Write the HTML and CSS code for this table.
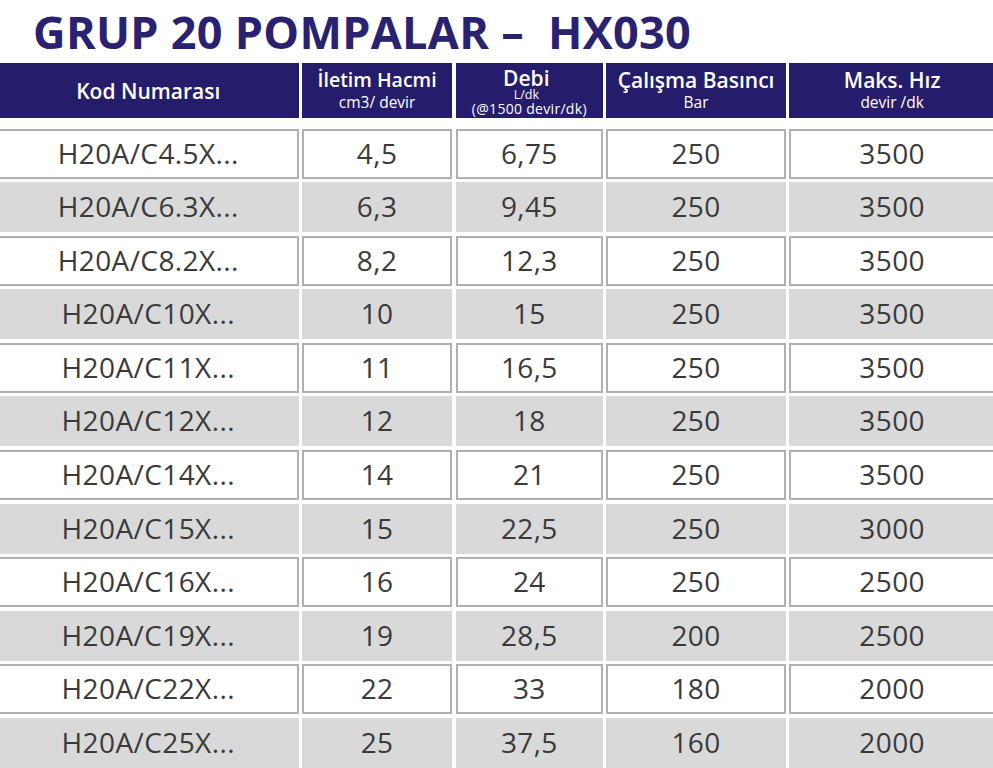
FILE: index.html
```html
<!DOCTYPE html>
<html lang="tr">
<head>
<meta charset="utf-8">
<title>GRUP 20 POMPALAR – HX030</title>
<link rel="stylesheet" href="styles.css">
</head>
<body>
<div class="page">
  <h1 class="title">GRUP 20 POMPALAR –&nbsp; HX030</h1>
  <div class="row head">
    <div class="hcell"><span class="hmain">Kod Numarası</span></div>
    <div class="hcell"><span class="hmain narrow">İletim Hacmi</span><span class="hsub">cm3/ devir</span></div>
    <div class="hcell debi"><span class="hmain">Debi</span><span class="htiny">L/dk</span><span class="htiny2">(@1500 devir/dk)</span></div>
    <div class="hcell"><span class="hmain">Çalışma Basıncı</span><span class="hsub">Bar</span></div>
    <div class="hcell"><span class="hmain">Maks. Hız</span><span class="hsub">devir /dk</span></div>
  </div>
  <div class="body">
    <div class="row white"><div class="cell">H20A/C4.5X...</div><div class="cell">4,5</div><div class="cell">6,75</div><div class="cell">250</div><div class="cell">3500</div></div>
    <div class="row grey"><div class="cell">H20A/C6.3X...</div><div class="cell">6,3</div><div class="cell">9,45</div><div class="cell">250</div><div class="cell">3500</div></div>
    <div class="row white"><div class="cell">H20A/C8.2X...</div><div class="cell">8,2</div><div class="cell">12,3</div><div class="cell">250</div><div class="cell">3500</div></div>
    <div class="row grey"><div class="cell">H20A/C10X...</div><div class="cell">10</div><div class="cell">15</div><div class="cell">250</div><div class="cell">3500</div></div>
    <div class="row white"><div class="cell">H20A/C11X...</div><div class="cell">11</div><div class="cell">16,5</div><div class="cell">250</div><div class="cell">3500</div></div>
    <div class="row grey"><div class="cell">H20A/C12X...</div><div class="cell">12</div><div class="cell">18</div><div class="cell">250</div><div class="cell">3500</div></div>
    <div class="row white"><div class="cell">H20A/C14X...</div><div class="cell">14</div><div class="cell">21</div><div class="cell">250</div><div class="cell">3500</div></div>
    <div class="row grey"><div class="cell">H20A/C15X...</div><div class="cell">15</div><div class="cell">22,5</div><div class="cell">250</div><div class="cell">3000</div></div>
    <div class="row white"><div class="cell">H20A/C16X...</div><div class="cell">16</div><div class="cell">24</div><div class="cell">250</div><div class="cell">2500</div></div>
    <div class="row grey"><div class="cell">H20A/C19X...</div><div class="cell">19</div><div class="cell">28,5</div><div class="cell">200</div><div class="cell">2500</div></div>
    <div class="row white"><div class="cell">H20A/C22X...</div><div class="cell">22</div><div class="cell">33</div><div class="cell">180</div><div class="cell">2000</div></div>
    <div class="row grey"><div class="cell">H20A/C25X...</div><div class="cell">25</div><div class="cell">37,5</div><div class="cell">160</div><div class="cell">2000</div></div>
  </div>
</div>
</body>
</html>
```

FILE: styles.css
```css
html, body {
  margin: 0;
  padding: 0;
  background: #ffffff;
  overflow: hidden;
}

.page {
  width: 993px;
  height: 768px;
  overflow: hidden;
  font-family: "Open Sans", "Noto Sans", sans-serif;
}

.title {
  margin: 0;
  height: 63px;
  box-sizing: border-box;
  padding: 9px 0 0 33px;
  font-size: 45px;
  line-height: 46px;
  font-weight: 700;
  letter-spacing: 0.3px;
  color: #2a2270;
  white-space: nowrap;
}

.row {
  display: grid;
  grid-template-columns: 300.5px 150.8px 147.3px 179.8px 206px;
  column-gap: 3.2px;
  margin-left: -2px;
}

.head {
  height: 55px;
}

.hcell {
  background: #251c6b;
  color: #ffffff;
  display: flex;
  flex-direction: column;
  align-items: center;
  justify-content: center;
  gap: 1px;
  text-align: center;
  white-space: nowrap;
}

.hcell.debi {
  gap: 0;
  padding-top: 3px;
  padding-right: 6px;
}

.hmain {
  font-size: 21px;
  font-weight: 600;
  line-height: 22px;
}

.hmain.narrow {
  font-size: 19.5px;
}

.debi .hmain {
  line-height: 21px;
}

.hsub {
  font-size: 15.5px;
  line-height: 20px;
}

.htiny {
  font-size: 12.5px;
  line-height: 12px;
}

.htiny2 {
  font-size: 14px;
  line-height: 15px;
  letter-spacing: 0.3px;
  margin-left: 6px;
}

.body {
  margin-top: 10.5px;
  display: flex;
  flex-direction: column;
  gap: 3.6px;
}

.body .row {
  height: 50px;
}

.cell {
  display: flex;
  align-items: center;
  justify-content: center;
  font-size: 28px;
  letter-spacing: 0.4px;
  color: #3a3a3a;
  box-sizing: border-box;
  padding-bottom: 2px;
}

.white .cell {
  background: #ffffff;
  border: 2px solid #b0b0b0;
}

.grey .cell {
  background: #d9d9d9;
}
```
